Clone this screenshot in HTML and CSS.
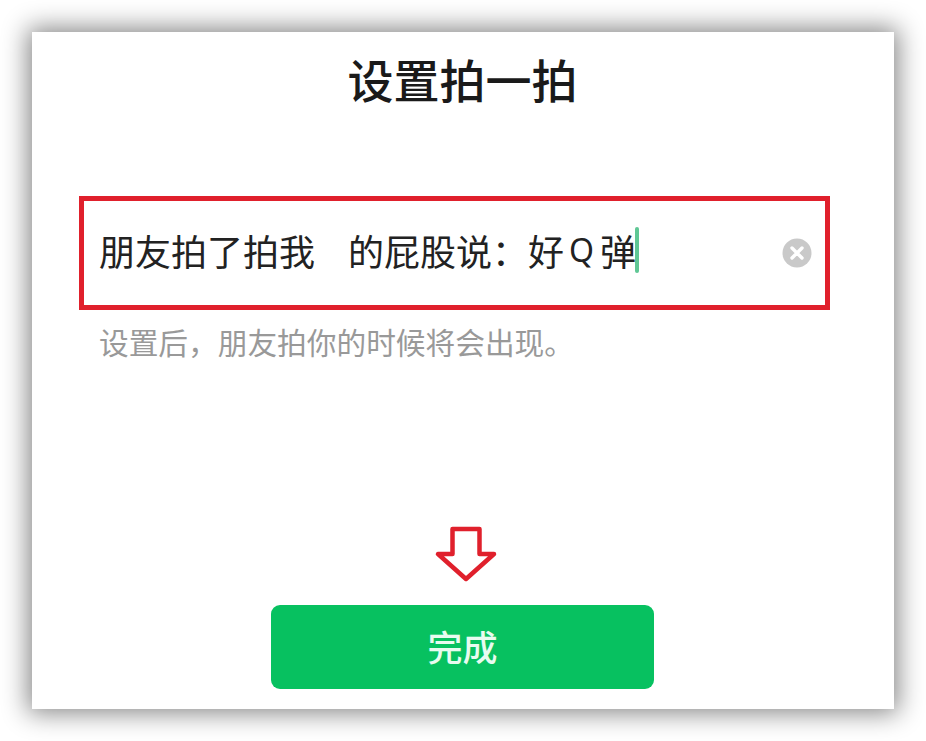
FILE: index.html
```html
<!DOCTYPE html>
<html lang="zh-CN">
<head>
    <meta charset="UTF-8">
    <meta name="viewport" content="width=device-width, initial-scale=1.0">
    <title>设置拍一拍</title>
    <link rel="stylesheet" href="styles.css">
</head>
<body>
    <div class="card">
        <h1>设置拍一拍</h1>
        <div class="input-box">
            <div class="input-text">
                <span>朋友拍了拍我</span>
                <span class="name-gap"></span>
                <span>的屁股说：好</span>
                <span class="latin">Q</span>
                <span>弹</span>
                <span class="cursor"></span>
            </div>
            <svg class="clear" viewBox="0 0 30 30" aria-hidden="true">
                <circle cx="15" cy="15" r="14.5" fill="#c9c9c9"/>
                <path d="M10 10 L20 20 M20 10 L10 20" stroke="#fff" stroke-width="3.4" stroke-linecap="round"/>
            </svg>
        </div>
        <p class="hint">设置后，朋友拍你的时候将会出现。</p>
        <svg class="arrow" viewBox="0 0 70 58" aria-hidden="true">
            <path d="M21.500 3 H48.500 V28 H63 L35 53 L7 28 H21.500 Z" fill="none" stroke="#e0202c" stroke-width="4.500" stroke-linejoin="round"/>
        </svg>
        <button class="done">完成</button>
    </div>
</body>
</html>
```

FILE: styles.css
```css
* {
    box-sizing: border-box;
}

body {
    margin: 0;
    padding: 32px;
    width: 926px;
    height: 741px;
    background-color: #fff;
    font-family: "Noto Sans CJK SC", "Liberation Sans", sans-serif;
    overflow: hidden;
}

.card {
    display: flex;
    flex-direction: column;
    align-items: center;
    width: 862px;
    height: 677px;
    padding: 13px 48px 20px 47px;
    background-color: #fff;
    box-shadow: 0 0 24px 4px rgba(0, 0, 0, 0.48);
}

.card h1 {
    margin: 0;
    font-size: 46px;
    line-height: 66px;
    font-weight: 500;
    color: #1a1a1a;
}

.input-box {
    display: flex;
    align-items: center;
    justify-content: space-between;
    align-self: flex-start;
    width: 751px;
    height: 114px;
    margin-top: 85px;
    padding: 0 13px 0 15px;
    border: 5px solid #e0202c;
}

.input-text {
    display: flex;
    align-items: center;
    padding-bottom: 6px;
    font-size: 36px;
    line-height: 46px;
    color: #222;
}

.name-gap {
    width: 33px;
}

.latin {
    margin: 0 6px 0 5px;
    font-family: "Noto Sans", sans-serif;
    font-size: 32px;
}

.cursor {
    width: 4px;
    height: 46px;
    margin-left: -1px;
    border-radius: 2px;
    background-color: #5fc795;
}

.clear {
    width: 30px;
    height: 30px;
}

.hint {
    align-self: flex-start;
    margin: 11px 0 0 20px;
    font-size: 29.700px;
    line-height: 42px;
    color: #999;
}

.arrow {
    width: 70px;
    height: 58px;
    margin-top: auto;
    margin-left: 7px;
}

.done {
    width: 383px;
    height: 84px;
    margin-top: 21px;
    padding-bottom: 4px;
    border: 0;
    border-radius: 9px;
    background-color: #07c160;
    font-family: inherit;
    font-size: 35px;
    font-weight: 500;
    color: #e8fbf0;
}
```
